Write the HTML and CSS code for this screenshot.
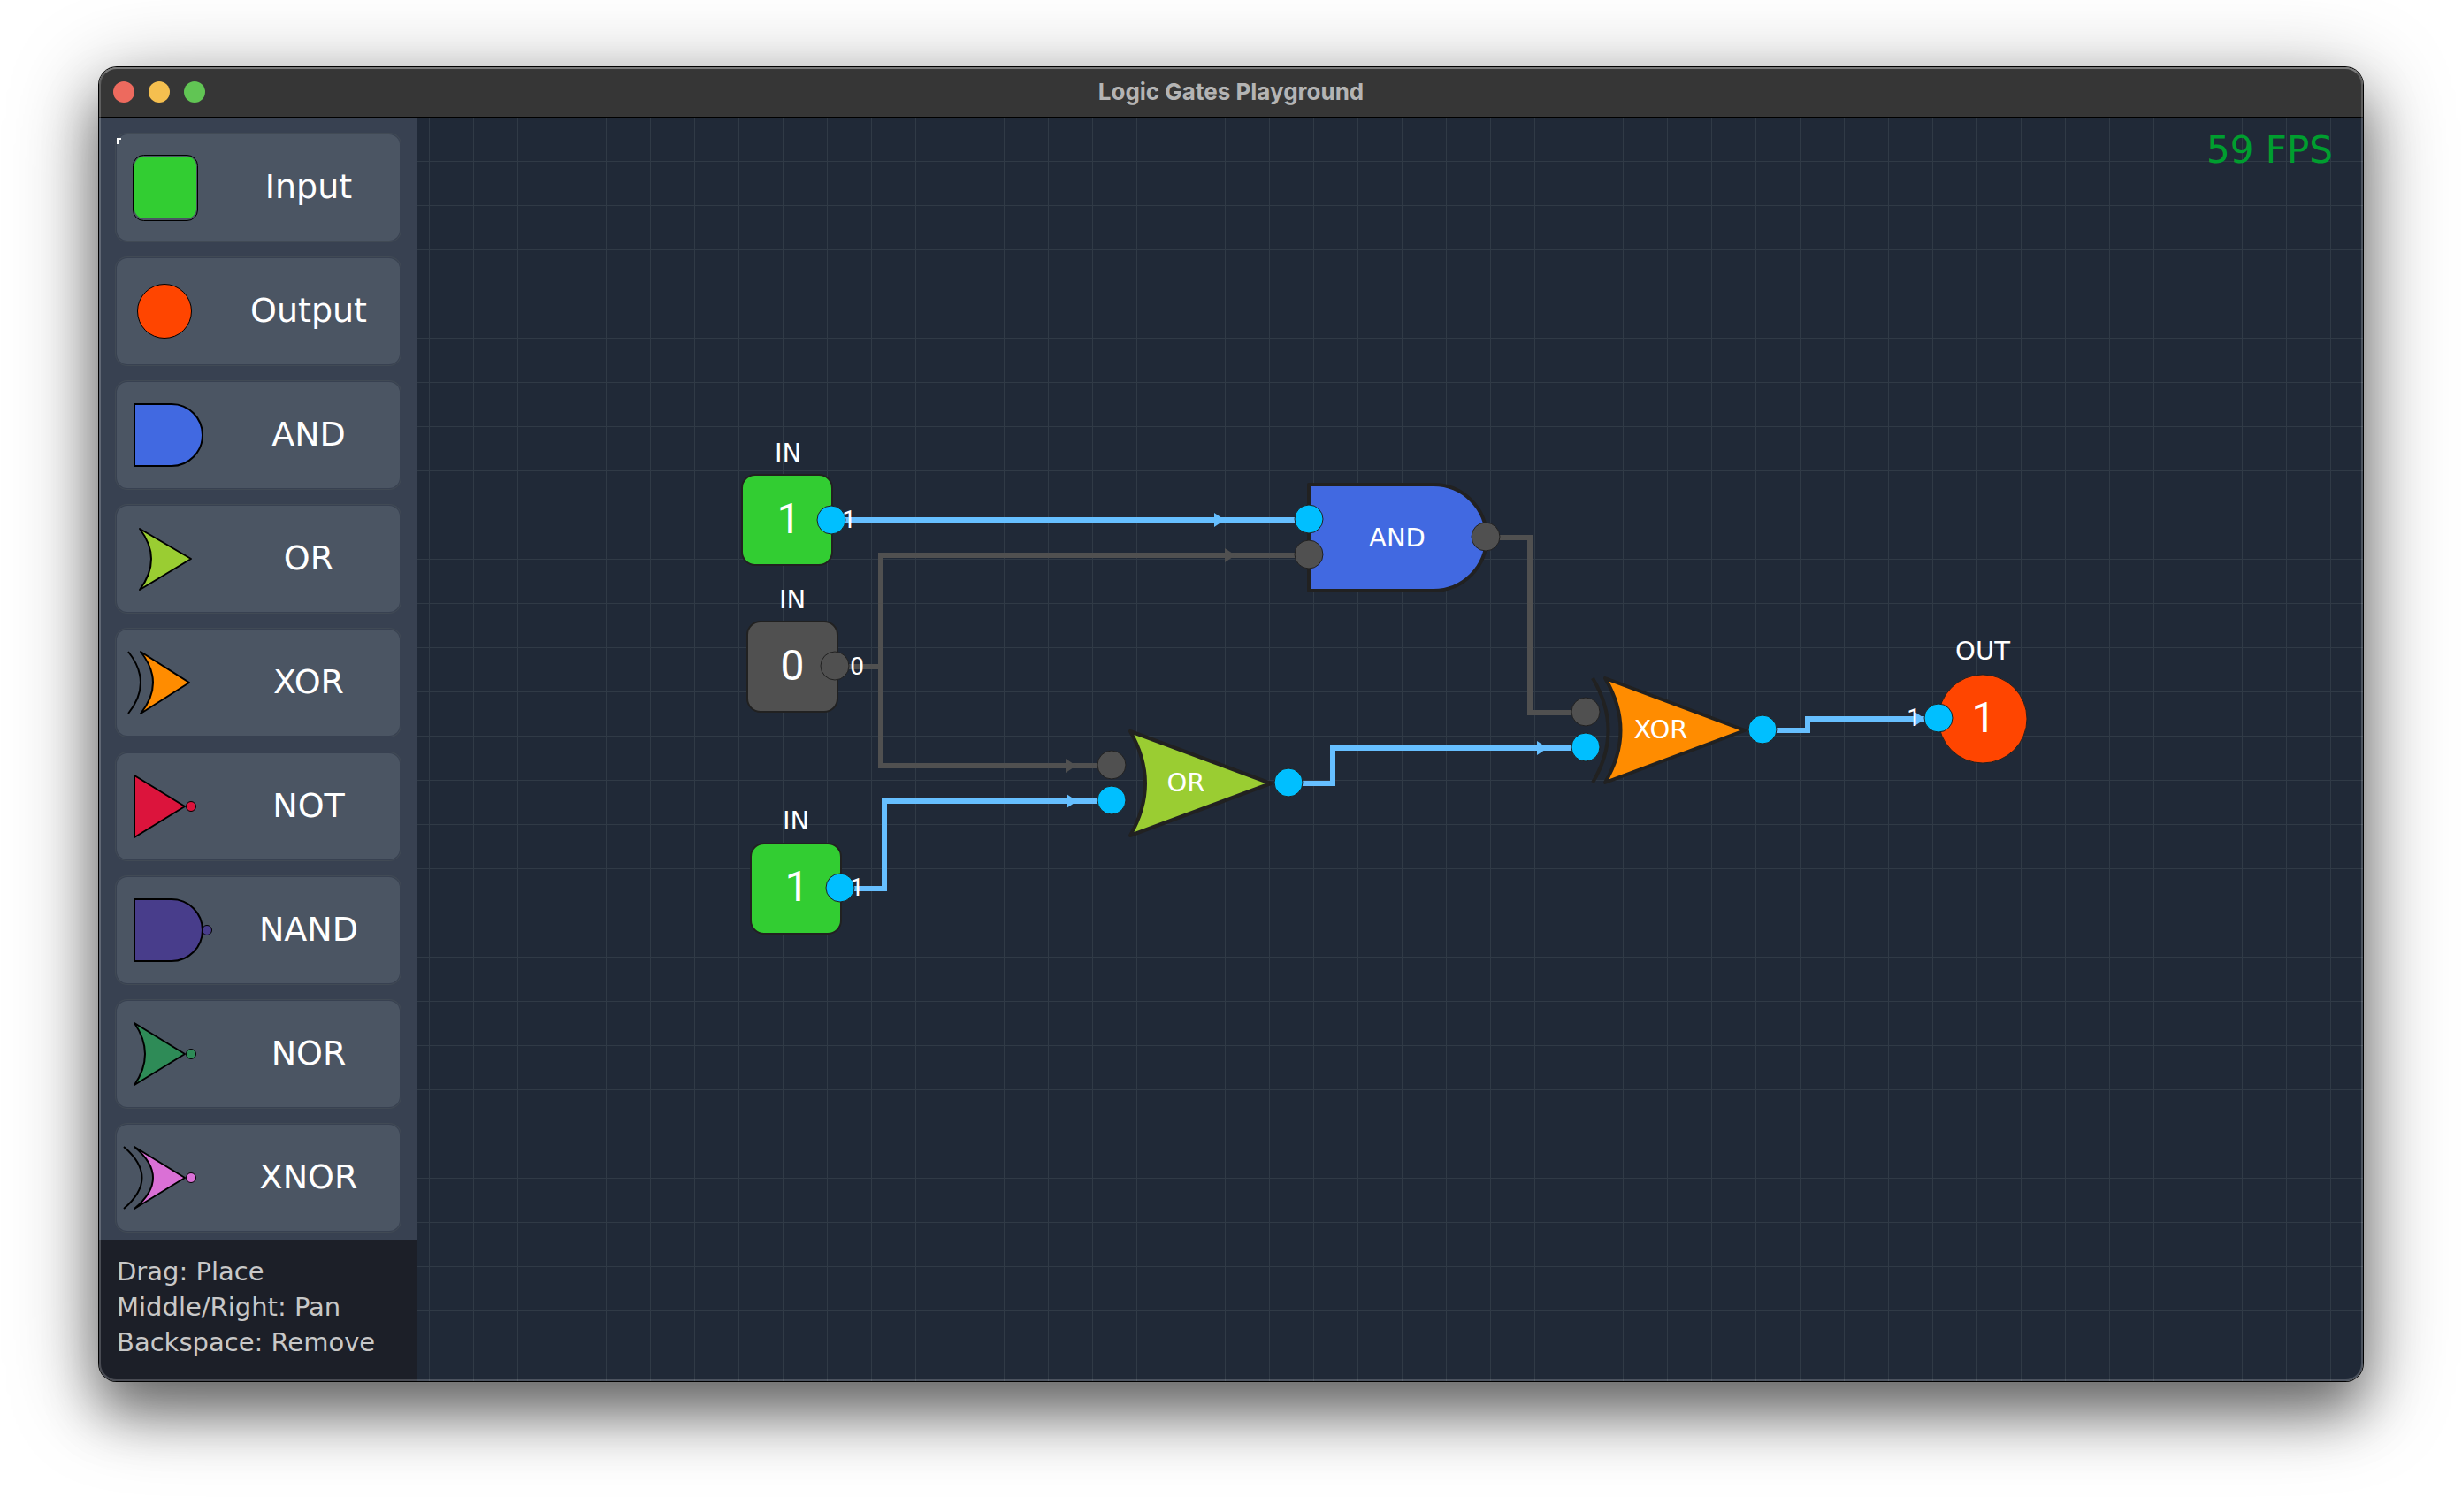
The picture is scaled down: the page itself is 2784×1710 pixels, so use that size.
FILE: index.html
```html
<!DOCTYPE html>
<html lang="en">
<head>
<meta charset="utf-8">
<title>Logic Gates Playground</title>
<link rel="stylesheet" href="styles.css">
</head>
<body>
<div class="window">
  <header class="titlebar">
    <div class="lights">
      <button class="light close" type="button" aria-label="Close"></button>
      <button class="light minimize" type="button" aria-label="Minimize"></button>
      <button class="light zoom" type="button" aria-label="Zoom"></button>
    </div>
    <h1 class="title">Logic Gates Playground</h1>
  </header>
  <div class="body">
    <aside class="sidebar">
      <div class="palette">
        <button class="card first" type="button">
          <svg class="icon" viewBox="0 0 116 120" aria-hidden="true"><rect x="18.500" y="23.500" width="73" height="74" rx="12" fill="none" stroke="#000"/><rect x="20" y="25" width="70" height="70" rx="11" fill="#32cd32"/></svg>
          <span class="label">Input</span>
        </button>
        <button class="card" type="button">
          <svg class="icon" viewBox="0 0 116 120" aria-hidden="true"><circle cx="54" cy="60" r="30.500" fill="#ff4500" stroke="#000"/></svg>
          <span class="label">Output</span>
        </button>
        <button class="card" type="button">
          <svg class="icon" viewBox="0 0 116 120" aria-hidden="true"><path d="M20 25H62A35 35 0 0 1 62 95H20Z" fill="#4169e1" stroke="#000" stroke-width="2"/></svg>
          <span class="label">AND</span>
        </button>
        <button class="card" type="button">
          <svg class="icon" viewBox="0 0 116 120" aria-hidden="true"><path d="M26 26Q52 60 26 95L84 60Z" fill="#9acd32" stroke="#000" stroke-width="2" stroke-linejoin="round"/></svg>
          <span class="label">OR</span>
        </button>
        <button class="card" type="button">
          <svg class="icon" viewBox="0 0 116 120" aria-hidden="true"><path d="M27 25Q55 60 27 95L82 60Z" fill="#ff8c00" stroke="#000" stroke-width="2" stroke-linejoin="round"/><path d="M13 25Q41 60 13 95" fill="none" stroke="#000" stroke-width="2"/></svg>
          <span class="label">XOR</span>
        </button>
        <button class="card" type="button">
          <svg class="icon" viewBox="0 0 116 120" aria-hidden="true"><path d="M20 25V95L77 60Z" fill="#dc143c" stroke="#000" stroke-width="2" stroke-linejoin="round"/><circle cx="84" cy="60" r="5.500" fill="#dc143c" stroke="#000"/></svg>
          <span class="label">NOT</span>
        </button>
        <button class="card" type="button">
          <svg class="icon" viewBox="0 0 116 120" aria-hidden="true"><path d="M20 25H62A35 35 0 0 1 62 95H20Z" fill="#483d8b" stroke="#000" stroke-width="2"/><circle cx="102" cy="60" r="5.500" fill="#483d8b" stroke="#000"/></svg>
          <span class="label">NAND</span>
        </button>
        <button class="card" type="button">
          <svg class="icon" viewBox="0 0 116 120" aria-hidden="true"><path d="M20 25Q44 60 20 95L77 60Z" fill="#2e8b57" stroke="#000" stroke-width="2" stroke-linejoin="round"/><circle cx="84" cy="60" r="5.500" fill="#2e8b57" stroke="#000"/></svg>
          <span class="label">NOR</span>
        </button>
        <button class="card" type="button">
          <svg class="icon" viewBox="0 0 116 120" aria-hidden="true"><path d="M20 25Q62 60 20 95L77 60Z" fill="#da70d6" stroke="#000" stroke-width="2" stroke-linejoin="round"/><path d="M8 25Q49 60 8 95" fill="none" stroke="#000" stroke-width="2"/><circle cx="84" cy="60" r="5.500" fill="#da70d6" stroke="#000"/></svg>
          <span class="label">XNOR</span>
        </button>
      </div>
      <div class="hints">
        <p>Drag: Place</p>
        <p>Middle/Right: Pan</p>
        <p>Backspace: Remove</p>
      </div>
    </aside>
    <main class="canvas">
      <svg class="circuit" viewBox="472 133 2200 1429" role="img" aria-label="Majority circuit">
        <g class="wire off">
          <path d="M944 754H996M1480 628H996V866H1256M1680 608H1730V806H1793"/>
        </g>
        <g class="wire on">
          <path d="M940 588H1480M950 1005H1000V906H1256M1456 886H1507V846H1793M1993 826H2044V813H2192"/>
        </g>
        <g class="arrow-off">
          <path d="M1385 620L1397 628L1385 636ZM1205 858L1217 866L1205 874Z"/>
        </g>
        <g class="arrow-on">
          <path d="M1373 580L1385 588L1373 596ZM1206 898L1218 906L1206 914ZM1738 838L1750 846L1738 854ZM2165 805L2177 813L2165 821Z"/>
        </g>

        <g class="gate-outline">
          <rect x="839" y="537" width="102" height="102" rx="15" fill="#32cd32" stroke-width="2"/>
          <rect x="845" y="703" width="102" height="102" rx="15" fill="#505050" stroke-width="2"/>
          <rect x="849" y="954" width="102" height="102" rx="15" fill="#32cd32" stroke-width="2"/>
          <circle cx="2242" cy="813" r="50" fill="#ff4500" stroke-width="1"/>
          <path d="M1480 548H1621A60 60 0 0 1 1621 668H1480Z" fill="#4169e1"/>
          <path d="M1278 827Q1312 886 1278 945L1437 886Z" fill="#9acd32"/>
          <path d="M1815 767Q1850 826 1815 885L1973 826Z" fill="#ff8c00"/>
          <path d="M1801 767Q1836 826 1801 885" fill="none"/>
        </g>

        <g class="pin on">
          <circle cx="940" cy="588" r="16"/>
          <circle cx="950" cy="1004" r="16"/>
          <circle cx="1480" cy="587" r="16"/>
          <circle cx="1257" cy="905" r="16"/>
          <circle cx="1457" cy="885" r="16"/>
          <circle cx="1793" cy="845" r="16"/>
          <circle cx="1993" cy="825" r="16"/>
          <circle cx="2192" cy="812" r="16"/>
        </g>
        <g class="pin off">
          <circle cx="944" cy="753" r="16"/>
          <circle cx="1480" cy="627" r="16"/>
          <circle cx="1257" cy="865" r="16"/>
          <circle cx="1680" cy="607" r="16"/>
          <circle cx="1793" cy="805" r="16"/>
        </g>

        <g class="name">
          <text x="891" y="522">IN</text>
          <text x="896" y="688">IN</text>
          <text x="900" y="938">IN</text>
          <text x="1580" y="618">AND</text>
          <text x="1341" y="895">OR</text>
          <text x="1878" y="835">XOR</text>
          <text x="2242" y="746">OUT</text>
        </g>
        <g class="value">
          <text x="892" y="603">1</text>
          <text x="896" y="769">0</text>
          <text x="901" y="1019">1</text>
          <text x="2243" y="828">1</text>
        </g>
        <g class="signal">
          <text x="960" y="597">1</text>
          <text x="969" y="763">0</text>
          <text x="969" y="1013">1</text>
          <text x="2164" y="821">1</text>
        </g>
      </svg>
      <output class="fps">59 FPS</output>
    </main>
  </div>
</div>
</body>
</html>
```
FILE: styles.css
```css
* { box-sizing: border-box; }

body {
  margin: 0;
  min-height: 100vh;
  padding: 76px 112px 148px;
  display: flex;
  background: #fff;
  font-family: "DejaVu Sans", sans-serif;
}

.window {
  position: relative;
  flex: 1;
  display: flex;
  flex-direction: column;
  border-radius: 20px;
  overflow: hidden;
  box-shadow: 0 0 0 1px #000, 0 36px 60px rgba(0, 0, 0, .42), 0 20px 100px rgba(0, 0, 0, .4);
}

/* translucent rim over the window's edge */
.window::after {
  content: "";
  position: absolute;
  inset: 0;
  border: 2px solid rgba(255, 255, 255, .2);
  border-top-color: rgba(255, 255, 255, .34);
  border-radius: 20px;
  pointer-events: none;
}

.titlebar {
  display: grid;
  grid-template-columns: 1fr auto 1fr;
  align-items: center;
  height: 57px;
  padding: 0 16px;
  background: #363636;
  border-bottom: 1px solid #000;
}

.lights { display: flex; gap: 16px; }

.light {
  width: 24px;
  height: 24px;
  padding: 0;
  border: 0;
  border-radius: 50%;
}

.close { background: #ed6a5e; }
.minimize { background: #f5bf4f; }
.zoom { background: #61c554; }

.title {
  margin: 0;
  font: 700 26px/32px Inter, sans-serif;
  color: #b4b4b4;
}

.body { flex: 1; display: flex; }

.sidebar {
  position: relative;
  width: 360px;
  display: flex;
  flex-direction: column;
  justify-content: space-between;
  background: #384151;
}

.sidebar::before {
  content: "";
  position: absolute;
  top: 79px;
  right: 0;
  bottom: 0;
  width: 1px;
  background: #d0d3d8;
}

.palette {
  display: flex;
  flex-direction: column;
  gap: 20px;
  padding: 19px 20px 10px;
}

.card {
  position: relative;
  display: flex;
  align-items: center;
  height: 120px;
  padding: 0;
  border: 0;
  border-radius: 12px;
  background: #4b5563;
  box-shadow: 0 0 0 1px #384151, 0 0 0 2px #414a55;
  color: #fff;
  font: 38px/44px "DejaVu Sans", sans-serif;
}

.first::before {
  content: "";
  position: absolute;
  left: 0;
  top: 4px;
  width: 3px;
  height: 5px;
  border: solid #fff;
  border-width: 2px 0 0 2px;
}

.icon { width: 116px; height: 120px; flex: none; }

.label { flex: 1; padding: 0 2px 2px 0; text-align: center; }

.hints {
  position: relative;
  height: 160px;
  padding: 16px 20px;
  background: rgba(2, 0, 2, .51);
  color: #c8c8c8;
  font-size: 29px;
  line-height: 40px;
}

.hints p { margin: 0; white-space: nowrap; }

.canvas {
  position: relative;
  flex: 1;
  overflow: hidden;
  background-color: #202937;
  background-image:
    linear-gradient(90deg, #303a46 1px, transparent 1px),
    linear-gradient(#303a46 1px, transparent 1px);
  background-size: 50px 50px;
  background-position: 13px 49px;
}

.circuit {
  position: absolute;
  left: 0;
  top: 0;
  width: 100%;
  height: 100%;
}

.fps {
  position: absolute;
  top: 14px;
  right: 34px;
  color: #009e2f;
  font-size: 42px;
  line-height: 46px;
}

.wire { fill: none; stroke-width: 6; }
.wire.on { stroke: #66bfff; }
.wire.off { stroke: #505050; }
.arrow-on { fill: #66bfff; }
.arrow-off { fill: #505050; }

.gate-outline {
  stroke: #212121;
  stroke-width: 4;
  stroke-linejoin: round;
}

.pin { stroke: #212121; stroke-width: 1; }
.pin.on { fill: #00bfff; }
.pin.off { fill: #505050; }

.circuit text { fill: #fff; text-anchor: middle; }
.name text { font-size: 29px; }
.value text { font: 48px Roboto, sans-serif; }
.signal text { font: 28px Roboto, sans-serif; }
```
